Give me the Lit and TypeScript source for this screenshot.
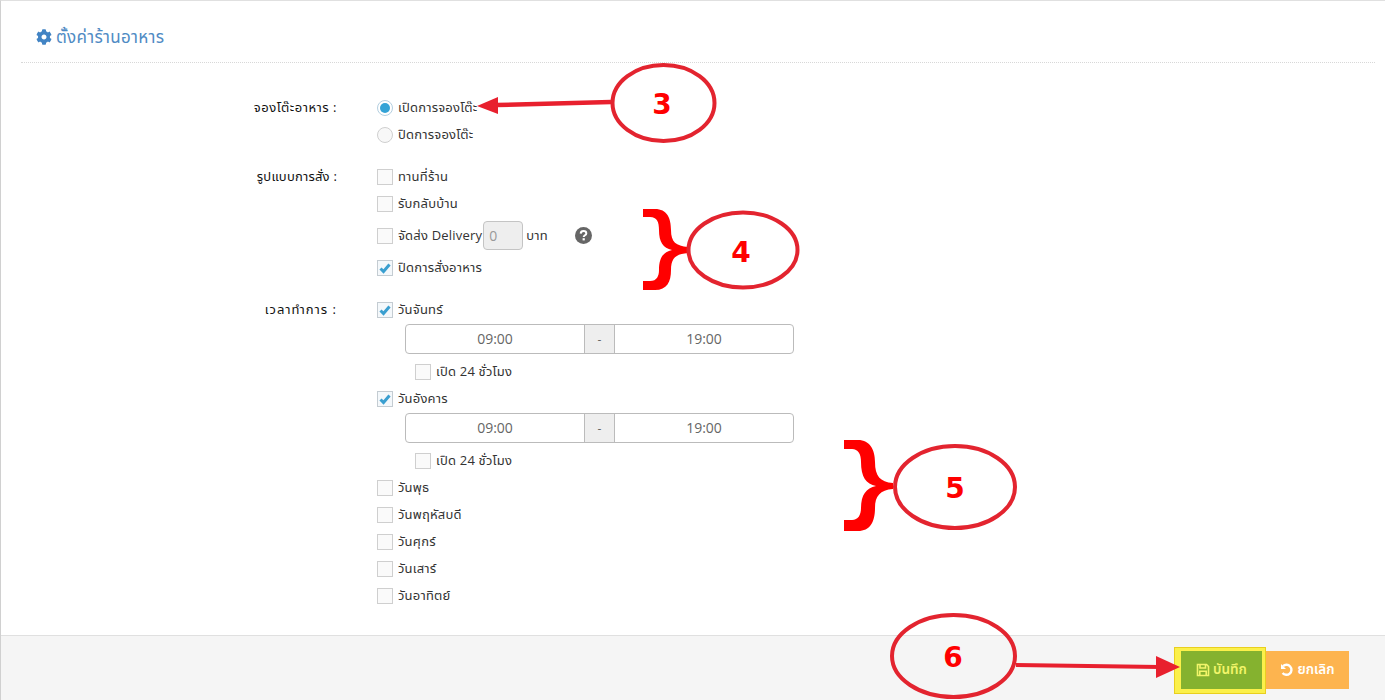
import { LitElement, html, css, svg } from "lit";
import { customElement } from "lit/decorators.js";

const GEAR = "M487.4 315.7l-42.6-24.6c4.3-23.2 4.3-47 0-70.2l42.6-24.6c4.9-2.8 7.1-8.6 5.5-14-11.1-35.6-30-67.8-54.7-94.6-3.8-4.1-10-5.1-14.8-2.3L380.8 110c-17.9-15.4-38.5-27.3-60.8-35.1V25.8c0-5.6-3.9-10.5-9.4-11.7-36.7-8.2-74.3-7.8-109.2 0-5.5 1.2-9.4 6.1-9.4 11.7V75c-22.2 7.9-42.8 19.8-60.8 35.1L88.7 85.5c-4.9-2.8-11-1.9-14.8 2.3-24.7 26.7-43.6 58.9-54.7 94.6-1.7 5.4.6 11.2 5.5 14L67.3 221c-4.3 23.2-4.3 47 0 70.2l-42.6 24.6c-4.9 2.8-7.1 8.6-5.5 14 11.1 35.6 30 67.8 54.7 94.6 3.8 4.1 10 5.1 14.8 2.3l42.6-24.6c17.9 15.4 38.5 27.3 60.8 35.1v49.2c0 5.6 3.9 10.5 9.4 11.7 36.7 8.2 74.3 7.8 109.2 0 5.5-1.2 9.4-6.1 9.4-11.7v-49.2c22.2-7.9 42.8-19.8 60.8-35.1l42.6 24.6c4.9 2.8 11 1.9 14.8-2.3 24.7-26.7 43.6-58.9 54.7-94.6 1.5-5.5-.7-11.3-5.6-14.1zM256 336c-44.1 0-80-35.9-80-80s35.9-80 80-80 80 35.9 80 80-35.9 80-80 80z";

@customElement("app-root")
export class AppRoot extends LitElement {
  static styles = css`
    :host { display: block; position: relative; width: 1385px; height: 700px; overflow: hidden; background: #fff;
      font-family: "Open Sans", "Noto Sans", "Noto Sans Thai", "DejaVu Sans", sans-serif; font-size: 13px; letter-spacing: 0.2px; color: #333; }
    * { box-sizing: border-box; }
    .page { height: 700px; display: flex; flex-direction: column; border-top: 1px solid #e0e0e0; border-left: 1px solid #d0d0d0; }
    .main { flex: 1; padding: 0 10px 0 20px; }
    .title { height: 62px; border-bottom: 1px dotted #d8d8d8; display: flex; align-items: center; gap: 4px; padding: 11px 0 0 15px; color: #4f8bc4; font-size: 17px; letter-spacing: 0.3px; line-height: 20px; }
    .title svg { width: 16px; height: 16px; fill: #4284c4; }
    .form { display: grid; grid-template-columns: 316px 1fr; column-gap: 40px; padding-top: 31px; }
    .label { text-align: right; font-size: 13px; letter-spacing: 0.5px; color: #111; line-height: 27px; height: 27px; }
    .label.narrow { letter-spacing: 0.2px; }
    .label.wide { letter-spacing: 1px; }
    .group { display: flex; flex-direction: column; }
    .row { display: flex; align-items: center; height: 27px; gap: 5px; line-height: 27px; white-space: nowrap; }
    .row.tall { height: 37px; }
    .box { width: 16px; height: 16px; flex: none; border: 1px solid #cfcfcf; background: #fafafa; display: flex; align-items: center; justify-content: center; }
    .box svg { width: 12px; height: 12px; fill: none; stroke: #3a9fd0; stroke-width: 3; }
    .box.on { background: #f4f8fb; border-color: #c4ccd2; }
    .radio { width: 16px; height: 16px; flex: none; border: 1px solid #cfcfcf; border-radius: 50%; background: #f8f8f8; display: flex; align-items: center; justify-content: center; }
    .radio.on { background: #fff; border-color: #b4cfe0; }
    .radio i { width: 10px; height: 10px; border-radius: 50%; background: #34a3d6; }
    .sec-gap { margin-top: 15px; }
    .qty { width: 40px; height: 29px; border: 1px solid #c4c4c4; border-radius: 4px; background: #eee; color: #999; font-size: 14px; padding-left: 5px; display: flex; align-items: center; margin: 0 -2px 0 -4px; }
    .help { width: 17px; height: 17px; margin-left: 22px; }
    .times { display: flex; width: 389px; height: 30px; margin: 1px 0 4px 28px; border: 1px solid #bbb; border-radius: 4px; font-size: 14px; letter-spacing: 0; color: #666; flex: none; padding-bottom: 1px; }
    .times span { flex: 1; display: flex; align-items: center; justify-content: center; }
    .times .dash { flex: none; width: 31px; margin-bottom: -1px; background: #eee; border-left: 1px solid #bbb; border-right: 1px solid #bbb; font-size: 12px; }
    .sub { margin-left: 38px; }
    .footer { height: 65px; flex: none; background: #f5f5f5; border-top: 1px solid #e0e0e0; display: flex; justify-content: flex-end; align-items: flex-start; padding: 11px 36px 0 0; }
    .mark { background: #fbf04a; border: 1px solid #e9cf1f; padding: 3px 3px 4px 6px; }
    .btn { height: 38px; display: flex; align-items: center; justify-content: center; gap: 3px; font-size: 13.5px; font-weight: 600; letter-spacing: 0; }
    .btn svg { width: 14px; height: 14px; }
    .save { width: 81px; background: #85b22f; color: #f2f56a; }
    .cancel { width: 83px; background: #fdb44f; color: #fff; margin-top: 4px; }
    .overlay { position: absolute; inset: 0; width: 1385px; height: 700px; pointer-events: none; }
    .overlay text { font-family: "DejaVu Sans", sans-serif; font-weight: 700; font-size: 28px; letter-spacing: 0; fill: #f00; text-anchor: middle; }
  `;

  private check(on = false) {
    return html`<span class="box ${on ? "on" : ""}">${on ? html`<svg viewBox="0 0 12 12"><path d="M1.5 6.5 4.5 9.5 10.5 2.5"/></svg>` : ""}</span>`;
  }

  private day(name: string, on = false) {
    return html`<div class="row">${this.check(on)}<span>${name}</span></div>
      ${on ? html`<div class="times"><span>09:00</span><span class="dash">-</span><span>19:00</span></div>
      <div class="row sub">${this.check()}<span>เปิด 24 ชั่วโมง</span></div>` : ""}`;
  }

  private bracket(d: string) {
    return svg`<path d=${d} fill="#f00"/>`;
  }

  render() {
    return html`
      <div class="page">
        <div class="main">
          <div class="title"><svg viewBox="0 0 512 512"><path d=${GEAR}/></svg><span>ตั้งค่าร้านอาหาร</span></div>
          <div class="form">
            <div class="label">จองโต๊ะอาหาร :</div>
            <div class="group">
              <div class="row"><span class="radio on"><i></i></span><span>เปิดการจองโต๊ะ</span></div>
              <div class="row"><span class="radio"></span><span>ปิดการจองโต๊ะ</span></div>
            </div>
            <div class="label narrow sec-gap">รูปแบบการสั่ง :</div>
            <div class="group sec-gap">
              <div class="row">${this.check()}<span>ทานที่ร้าน</span></div>
              <div class="row">${this.check()}<span>รับกลับบ้าน</span></div>
              <div class="row tall">${this.check()}<span>จัดส่ง Delivery</span><span class="qty">0</span><span>บาท</span>
                <svg class="help" viewBox="0 0 17 17"><circle cx="8.5" cy="8.5" r="8.5" fill="#666"/><path d="M5.7 6.6C5.8 4.9 7 4.1 8.5 4.1 10.2 4.1 11.3 5.1 11.3 6.4 11.3 8.3 8.7 8.2 8.7 10" fill="none" stroke="#fff" stroke-width="2"/><rect x="7.6" y="11.2" width="2.2" height="2.2" fill="#fff"/></svg>
              </div>
              <div class="row">${this.check(true)}<span>ปิดการสั่งอาหาร</span></div>
            </div>
            <div class="label wide sec-gap">เวลาทำการ :</div>
            <div class="group sec-gap">
              ${this.day("วันจันทร์", true)}
              ${this.day("วันอังคาร", true)}
              ${this.day("วันพุธ")}
              ${this.day("วันพฤหัสบดี")}
              ${this.day("วันศุกร์")}
              ${this.day("วันเสาร์")}
              ${this.day("วันอาทิตย์")}
            </div>
          </div>
        </div>
        <div class="footer">
          <div class="mark"><div class="btn save">
            <svg viewBox="0 0 14 14" fill="none" stroke="#f2f56a" stroke-width="1.6"><path d="M1.5 1.500H10.500L12.500 3.500V12.500H1.500Z"/><path d="M4 1.500V5H9.500V1.500M3.800 12.500V8.200H10.200V12.500"/></svg>
            <span>บันทึก</span></div></div>
          <div class="btn cancel">
            <svg viewBox="0 0 14 14" fill="none" stroke="#fff" stroke-width="2.4"><path d="M3 3.200A5 5 0 1 1 2.600 10"/><path d="M1 1V6H6Z" fill="#fff" stroke="none"/></svg>
            <span>ยกเลิก</span></div>
        </div>
      </div>
      <svg class="overlay" viewBox="0 0 1385 700">
        <path d="M611 102 496 105" stroke="#e8202e" stroke-width="4.500" fill="none"/>
        <path d="M477 106 498 97 498 114Z" fill="#e8202e"/>
        <ellipse cx="663.500" cy="103" rx="51" ry="38" fill="none" stroke="#e3242f" stroke-width="4"/>
        <text x="662" y="114">3</text>
        ${this.bracket("M643 209H655C667 209 671 218 671 230 671 242 676 246 688 247V253C676 254 671 258 671 270 671 282 667 290 655 290H643V281H650C657 281 659 276 659 270 659 258 663 252 672 250 663 248 659 242 659 230 659 222 657 217 650 217H643Z")}
        <ellipse cx="743" cy="250" rx="54.500" ry="37.500" fill="#fff" stroke="#e3242f" stroke-width="4"/>
        <text x="741" y="262">4</text>
        ${this.bracket("M844 440H858C870 440 875 450 875 462 875 476 880 482 893 483V489C880 490 875 496 875 508 875 522 870 531 858 531H844V520H852C858 520 861 515 861 508 861 495 866 488 876 486 866 484 861 477 861 462 861 454 858 449 852 449H844Z")}
        <ellipse cx="955" cy="487" rx="60" ry="41" fill="#fff" stroke="#e3242f" stroke-width="4"/>
        <text x="955" y="498">5</text>
        <ellipse cx="953.500" cy="656" rx="61.500" ry="41" fill="none" stroke="#e3242f" stroke-width="4"/>
        <text x="953" y="667">6</text>
        <path d="M1016 665 1160 667" stroke="#e8202e" stroke-width="4" fill="none"/>
        <path d="M1180 667 1156 656 1156 678Z" fill="#e8202e"/>
      </svg>
    `;
  }
}
